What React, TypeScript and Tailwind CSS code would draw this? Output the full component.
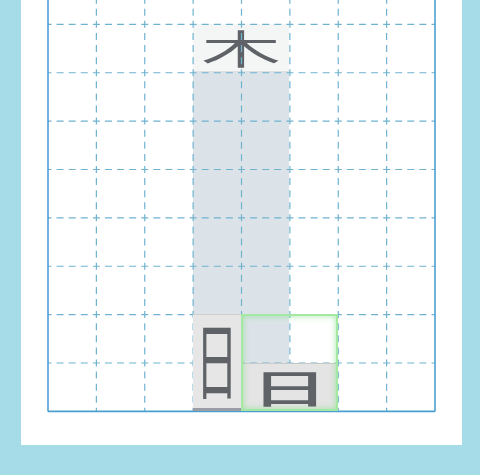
const CELL = 48.375;
const W = CELL * 8;
const H = CELL * 9;

function GridLines() {
  const cols = [1, 2, 3, 4, 5, 6, 7];
  const rows = [1, 2, 3, 4, 5, 6, 7, 8];
  const dash = { strokeDasharray: `7 ${CELL / 4 - 7}`, strokeDashoffset: 3.5 };
  return (
    <svg className="absolute inset-0 overflow-visible" width={W} height={H}>
      <g stroke="#6fb3cf" strokeWidth={1.2} fill="none">
        {cols.map((k) => (
          <line key={`v${k}`} x1={k * CELL} y1={0} x2={k * CELL} y2={H} {...dash} />
        ))}
        {rows.map((k) => (
          <line key={`h${k}`} x1={0} y1={k * CELL} x2={W} y2={k * CELL} {...dash} />
        ))}
      </g>
      <g stroke="#4b9fd2" strokeWidth={1.6} fill="none">
        <line x1={0} y1={0} x2={0} y2={H} />
        <line x1={W} y1={0} x2={W} y2={H} />
        <line x1={0} y1={H} x2={W} y2={H} />
      </g>
    </svg>
  );
}

const glyph = "leading-none text-[#5f6367] font-['Noto_Sans_CJK_SC',sans-serif]";

export default function App() {
  return (
    <div className="h-[475px] w-[480px] overflow-hidden bg-[#a6dce7]">
      <div className="ml-[21px] h-[445px] w-[441px] overflow-hidden bg-white">
        <div className="relative ml-[26.5px] mt-[-24.4px] h-[435.375px] w-[387px]">
          {/* under the lines */}
          <div className="absolute inset-0 grid grid-cols-8 grid-rows-9">
            <div className="col-start-4 col-span-2 row-start-2 row-span-8 bg-[#a8b9c5]/40" />
            <div className="col-start-4 col-span-2 row-start-2 flex items-center justify-center border-b border-[#dde1e4] bg-[#f6f6f6]/90">
              <span className={`${glyph} inline-block translate-y-[-1px] scale-x-200 text-[40px] font-normal`}>木</span>
            </div>
          </div>

          <GridLines />

          {/* over the lines */}
          <div className="absolute inset-0 grid grid-cols-8 grid-rows-9">
            <div className="col-start-4 row-start-8 row-span-2 flex items-center justify-center border-t border-[#cfcfcf] border-b-[3px] border-b-[#9c9ca4] bg-[#e6e6e6]">
              <span className={`${glyph} inline-block translate-y-[-5px] scale-y-200 text-[42px] font-normal`}>日</span>
            </div>
            <div className="col-start-5 col-span-2 row-start-9 flex items-center justify-center border-t border-[#c9c9c9] bg-[#e4e4e4]">
              <span className={`${glyph} inline-block translate-y-[-1px] scale-x-200 text-[39px] font-medium`}>日</span>
            </div>
            <div className="col-start-5 col-span-2 row-start-8 row-span-2 border-2 border-[#a4e8a4] shadow-[inset_0_0_6px_rgba(130,225,130,0.7)]" />
          </div>
        </div>
      </div>
    </div>
  );
}
